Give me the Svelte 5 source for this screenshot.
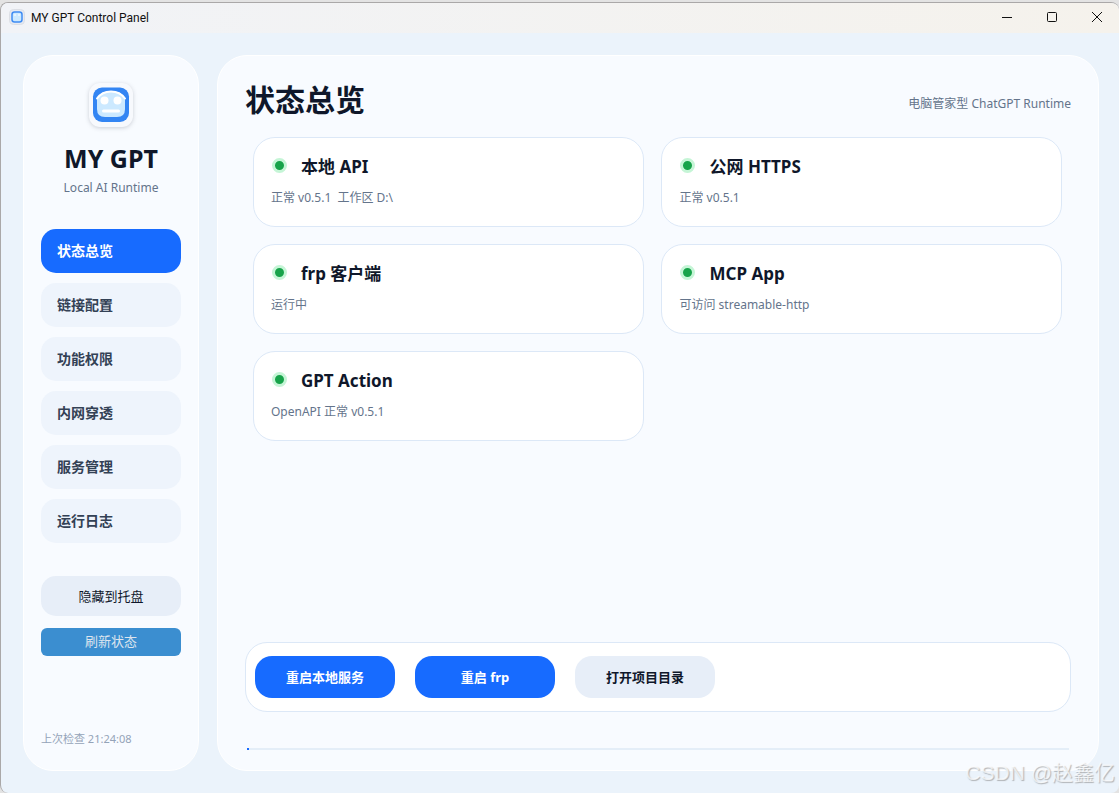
<script>
  let current = $state('overview');

  const pages = [
    { id: 'overview', label: '状态总览' },
    { id: 'links', label: '链接配置' },
    { id: 'permissions', label: '功能权限' },
    { id: 'tunnel', label: '内网穿透' },
    { id: 'services', label: '服务管理' },
    { id: 'logs', label: '运行日志' },
  ];

  const services = [
    { name: '本地 API', detail: '正常 v0.5.1  工作区 D:\\' },
    { name: '公网 HTTPS', detail: '正常 v0.5.1' },
    { name: 'frp 客户端', detail: '运行中' },
    { name: 'MCP App', detail: '可访问 streamable-http' },
    { name: 'GPT Action', detail: 'OpenAPI 正常 v0.5.1' },
  ];

  const title = $derived(pages.find((p) => p.id === current).label);
</script>

{#snippet robot(size)}
  <svg class="robot" width={size} height={size} viewBox="0 0 48 48" aria-hidden="true">
    <rect x="2" y="2" width="44" height="44" rx="11" fill="#f7f9fd" />
    <rect x="6" y="6.500" width="36" height="34.500" rx="9" fill="#3385f3" />
    <path d="M10 17Q14 10 24 10T38 17V28Q38 36 30 36H18Q10 36 10 28Z" fill="#cce9ff" />
    <path d="M10 17.500Q15 10.500 24 10.500T38 17.500" fill="none" stroke="#fff" stroke-width="2" stroke-linecap="round" />
    <circle cx="17.500" cy="19.500" r="4" fill="#fff" />
    <circle cx="30.500" cy="19.500" r="4" fill="#fff" />
    <path d="M16.500 30H31.500" stroke="#fff" stroke-width="3" stroke-linecap="round" />
  </svg>
{/snippet}

<div class="window">
  <header class="titlebar">
    <svg class="app-icon" width="16" height="16" viewBox="0 0 16 16" aria-hidden="true">
      <rect x="0.500" y="0.500" width="15" height="15" rx="4" fill="#e6eaf2" stroke="#dcdfe5" />
      <rect x="3" y="3" width="10" height="10" rx="2.500" fill="#cce9ff" stroke="#3f8cf3" stroke-width="1.500" />
      <path d="M5 6H7M9 6H11" stroke="#fff" />
    </svg>
    <span class="caption">MY GPT Control Panel</span>
    <div class="controls">
      <button aria-label="最小化">
        <svg width="12" height="12" viewBox="0 0 12 12"><path d="M1 6.500H11" /></svg>
      </button>
      <button aria-label="最大化">
        <svg width="12" height="12" viewBox="0 0 12 12"><rect x="1.500" y="1.500" width="9" height="9" rx="1" /></svg>
      </button>
      <button aria-label="关闭">
        <svg width="12" height="12" viewBox="0 0 12 12"><path d="M1 1L11 11M11 1L1 11" /></svg>
      </button>
    </div>
  </header>

  <div class="body">
    <aside class="sidebar">
      <div class="brand">
        {@render robot(48)}
        <strong>MY GPT</strong>
        <span>Local AI Runtime</span>
      </div>

      <nav>
        {#each pages as page}
          <button
            class:active={page.id === current}
            aria-current={page.id === current ? 'page' : undefined}
            onclick={() => (current = page.id)}
          >
            {page.label}
          </button>
        {/each}
      </nav>

      <button class="hide">隐藏到托盘</button>
      <button class="refresh">刷新状态</button>
      <p class="checked">上次检查 21:24:08</p>
    </aside>

    <main>
      <div class="heading">
        <h1>{title}</h1>
        <span>电脑管家型 ChatGPT Runtime</span>
      </div>

      <section class="cards">
        {#each services as service}
          <article>
            <h2><i class="dot"></i>{service.name}</h2>
            <p>{service.detail}</p>
          </article>
        {/each}
      </section>

      <div class="actions">
        <button class="primary">重启本地服务</button>
        <button class="primary">重启 frp</button>
        <button>打开项目目录</button>
      </div>

      <div class="progress" role="progressbar" aria-label="进度" aria-valuenow="0"><span></span></div>
    </main>
  </div>
</div>

<div class="watermark">CSDN @赵鑫亿</div>

<style>
  :global(body) {
    background: #e3e3e3;
  }

  :global(#app) {
    padding-top: 2px;
  }

  .window {
    display: flex;
    flex-direction: column;
    box-sizing: border-box;
    min-height: calc(100vh - 2px);
    border: solid #aaa8a8;
    border-width: 1px 0 0 1px;
    border-radius: 8px;
    overflow: hidden;
    background: #ebf3fb;
    color: #0f172a;
    font-family: 'Noto Sans', 'Noto Sans CJK SC', sans-serif;
    font-size: 12px;
  }

  button {
    padding: 0 0 2px;
    border: none;
    background: #e7eef8;
    color: inherit;
    font: inherit;
    font-size: 13px;
    cursor: pointer;
  }

  .titlebar {
    display: flex;
    align-items: center;
    height: 30px;
    padding-left: 8px;
    background: linear-gradient(90deg, #f1f3f7, #f5f2ec);
    color: #111;
  }

  .app-icon {
    margin-bottom: 2px;
  }

  .caption {
    margin-left: 6px;
    padding-bottom: 1px;
    font-family: Roboto, 'Noto Sans', sans-serif;
  }

  .controls {
    display: flex;
    align-self: stretch;
    margin-left: auto;
  }

  .controls button {
    display: grid;
    place-items: center;
    width: 45px;
    background: none;
  }

  .controls svg {
    fill: none;
    stroke: #111;
  }

  .body {
    display: flex;
    flex: 1;
    gap: 18px;
    padding: 22px 20px 22px 22px;
  }

  .sidebar,
  main {
    display: flex;
    flex-direction: column;
    box-sizing: border-box;
    border: 1px solid #fff;
    border-radius: 30px;
    background: #f8fbff;
  }

  .sidebar {
    flex: none;
    width: 176px;
    padding: 25px 17px 21px;
  }

  .brand {
    display: flex;
    flex-direction: column;
    align-items: center;
    color: #64748b;
  }

  .robot {
    filter: drop-shadow(0 1px 2px #0f172a30);
  }

  .brand strong {
    margin-top: 13px;
    color: #0f172a;
    font-size: 25px;
    line-height: 32px;
  }

  .brand span {
    margin-top: 4px;
    line-height: 20px;
  }

  nav {
    display: flex;
    flex-direction: column;
    gap: 10px;
    margin-top: 31px;
  }

  nav button {
    height: 44px;
    padding-left: 16px;
    border-radius: 15px;
    background: #eef4fc;
    color: #334155;
    font-size: 14px;
    font-weight: 700;
    text-align: left;
  }

  nav button.active {
    background: #176bff;
    color: #fff;
  }

  .hide {
    height: 40px;
    margin-top: 33px;
    border-radius: 15px;
  }

  .refresh {
    height: 28px;
    margin-top: 12px;
    padding-bottom: 3px;
    border-radius: 6px;
    background: #3b8ed0;
    color: #dce4ee;
  }

  .checked {
    margin: auto 0 0;
    color: #94a3b8;
    font-size: 11px;
    line-height: 20px;
  }

  main {
    flex: 1;
    min-width: 0;
    padding: 25px 27px 20px;
  }

  .heading {
    display: flex;
    justify-content: space-between;
    align-items: center;
    color: #64748b;
  }

  h1 {
    margin: 0;
    color: #0f172a;
    font-size: 30px;
    line-height: 38px;
  }

  .heading span {
    padding-top: 6px;
  }

  .cards {
    display: grid;
    grid-template-columns: 391fr 400fr;
    gap: 17px;
    margin: 18px 9px 0 8px;
  }

  article {
    box-sizing: border-box;
    height: 90px;
    padding: 16px 17px;
    border: 1px solid #dce8f7;
    border-radius: 22px;
    background: #fff;
  }

  h2 {
    display: flex;
    align-items: center;
    gap: 14px;
    margin: 0;
    font-size: 17px;
    line-height: 26px;
  }

  .dot {
    box-sizing: border-box;
    width: 15px;
    height: 15px;
    margin: 0 0 3px 1px;
    border: 3px solid #c5f5d6;
    border-radius: 50%;
    background: #17a34a;
  }

  article p {
    margin: 8px 0 0;
    color: #64748b;
    line-height: 20px;
    white-space: pre;
  }

  .actions {
    display: flex;
    gap: 20px;
    margin-top: auto;
    padding: 13px 9px;
    border: 1px solid #dce8f7;
    border-radius: 22px;
    background: #fff;
  }

  .actions button {
    width: 140px;
    height: 42px;
    border-radius: 17px;
    font-weight: 700;
  }

  .actions .primary {
    background: #176bff;
    color: #fff;
  }

  .progress {
    height: 2px;
    margin: 36px 2px 0;
    background: #e4eef8;
  }

  .progress span {
    display: block;
    width: 2px;
    height: 100%;
    background: #176bff;
  }

  .watermark {
    position: absolute;
    right: 4px;
    bottom: 5px;
    color: #ffffffb0;
    font: 21px/30px 'Liberation Sans', 'Noto Sans CJK SC', sans-serif;
    text-shadow: 1px 1px 1px #8889;
    pointer-events: none;
  }
</style>
